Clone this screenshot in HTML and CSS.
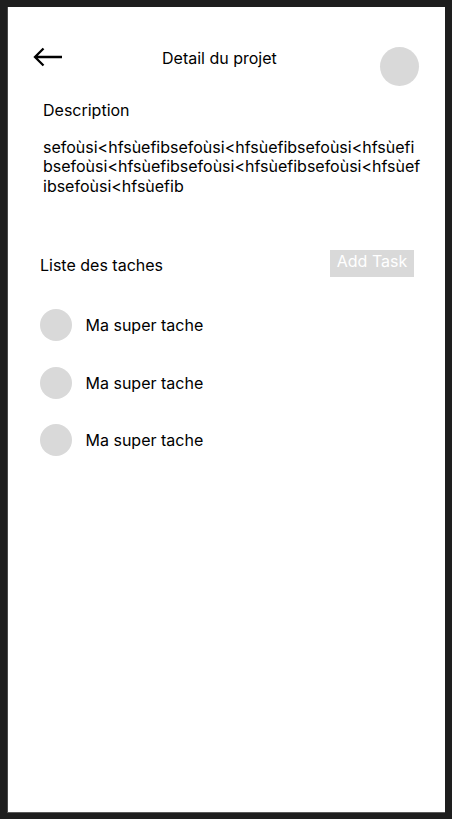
FILE: index.html
```html
<!DOCTYPE html>
<html lang="fr">
<head>
<meta charset="utf-8">
<title>Detail du projet</title>
<link rel="stylesheet" href="styles.css">
</head>
<body>
<div class="screen">
  <header class="header">
    <svg class="back" width="30" height="20" viewBox="0 0 30 20" aria-hidden="true">
      <path d="M29 10H2M10.5 1.5L2 10l8.5 8.5" fill="none" stroke="#000" stroke-width="2.3" stroke-linecap="butt" stroke-linejoin="miter"/>
    </svg>
    <h1 class="title">Detail du projet</h1>
    <div class="avatar"></div>
  </header>
  <section class="desc">
    <h2 class="label">Description</h2>
    <p class="text">sefoùsi&lt;hfsùefibsefoùsi&lt;hfsùefibsefoùsi&lt;hfsùefibsefoùsi&lt;hfsùefibsefoùsi&lt;hfsùefibsefoùsi&lt;hfsùefibsefoùsi&lt;hfsùefib</p>
  </section>
  <section class="tasks">
    <div class="tasks-head">
      <h2 class="label">Liste des taches</h2>
      <button class="add">Add Task</button>
    </div>
    <ul class="list">
      <li class="task"><span class="dot"></span>Ma super tache</li>
      <li class="task"><span class="dot"></span>Ma super tache</li>
      <li class="task"><span class="dot"></span>Ma super tache</li>
    </ul>
  </section>
</div>
</body>
</html>
```

FILE: styles.css
```css
html, body {
  margin: 0;
  padding: 0;
  background: #1e1e1e;
}
body {
  font-family: Inter, "Liberation Sans", sans-serif;
  color: #000;
  padding: 7px 7px 6px 7px;
}
.screen {
  box-sizing: border-box;
  width: 438px;
  height: 806px;
  background: #fff;
  border-left: 1px solid #4a4a4a;
  border-bottom: 1px solid #5a5a5a;
}
.header {
  display: flex;
  align-items: flex-start;
  padding: 40px 26px 0 25px;
}
.back {
  display: block;
  flex: none;
}
.title {
  margin: 1px 0 0 99px;
  font-size: 16px;
  font-weight: 400;
  line-height: 20px;
  flex: 1;
}
.avatar {
  flex: none;
  width: 39px;
  height: 39px;
  border-radius: 50%;
  background: #d9d9d9;
}
.label {
  margin: 0;
  font-size: 16px;
  font-weight: 400;
  line-height: 20px;
}
.desc {
  padding: 14px 0 0 35px;
}
.text {
  margin: 17.5px 0 0 0;
  width: 379px;
  font-size: 16px;
  line-height: 19.5px;
  word-break: break-all;
}
.tasks {
  padding: 0 31px 0 32px;
}
.tasks-head {
  display: flex;
  justify-content: space-between;
  align-items: flex-start;
  margin-top: 53.5px;
}
.tasks-head .label {
  margin-top: 5px;
}
.add {
  width: 84px;
  height: 27px;
  border: none;
  background: #d9d9d9;
  color: #fff;
  font-family: Inter, "Liberation Sans", sans-serif;
  font-size: 16px;
  line-height: 20px;
  padding: 0 0 4px;
}
.list {
  list-style: none;
  margin: 32.5px 0 0;
  padding: 0;
  display: flex;
  flex-direction: column;
  gap: 25.5px;
}
.task {
  display: flex;
  align-items: center;
  gap: 13.5px;
  font-size: 16px;
  line-height: 20px;
}
.dot {
  width: 32px;
  height: 32px;
  border-radius: 50%;
  background: #d9d9d9;
  flex: none;
}
```
